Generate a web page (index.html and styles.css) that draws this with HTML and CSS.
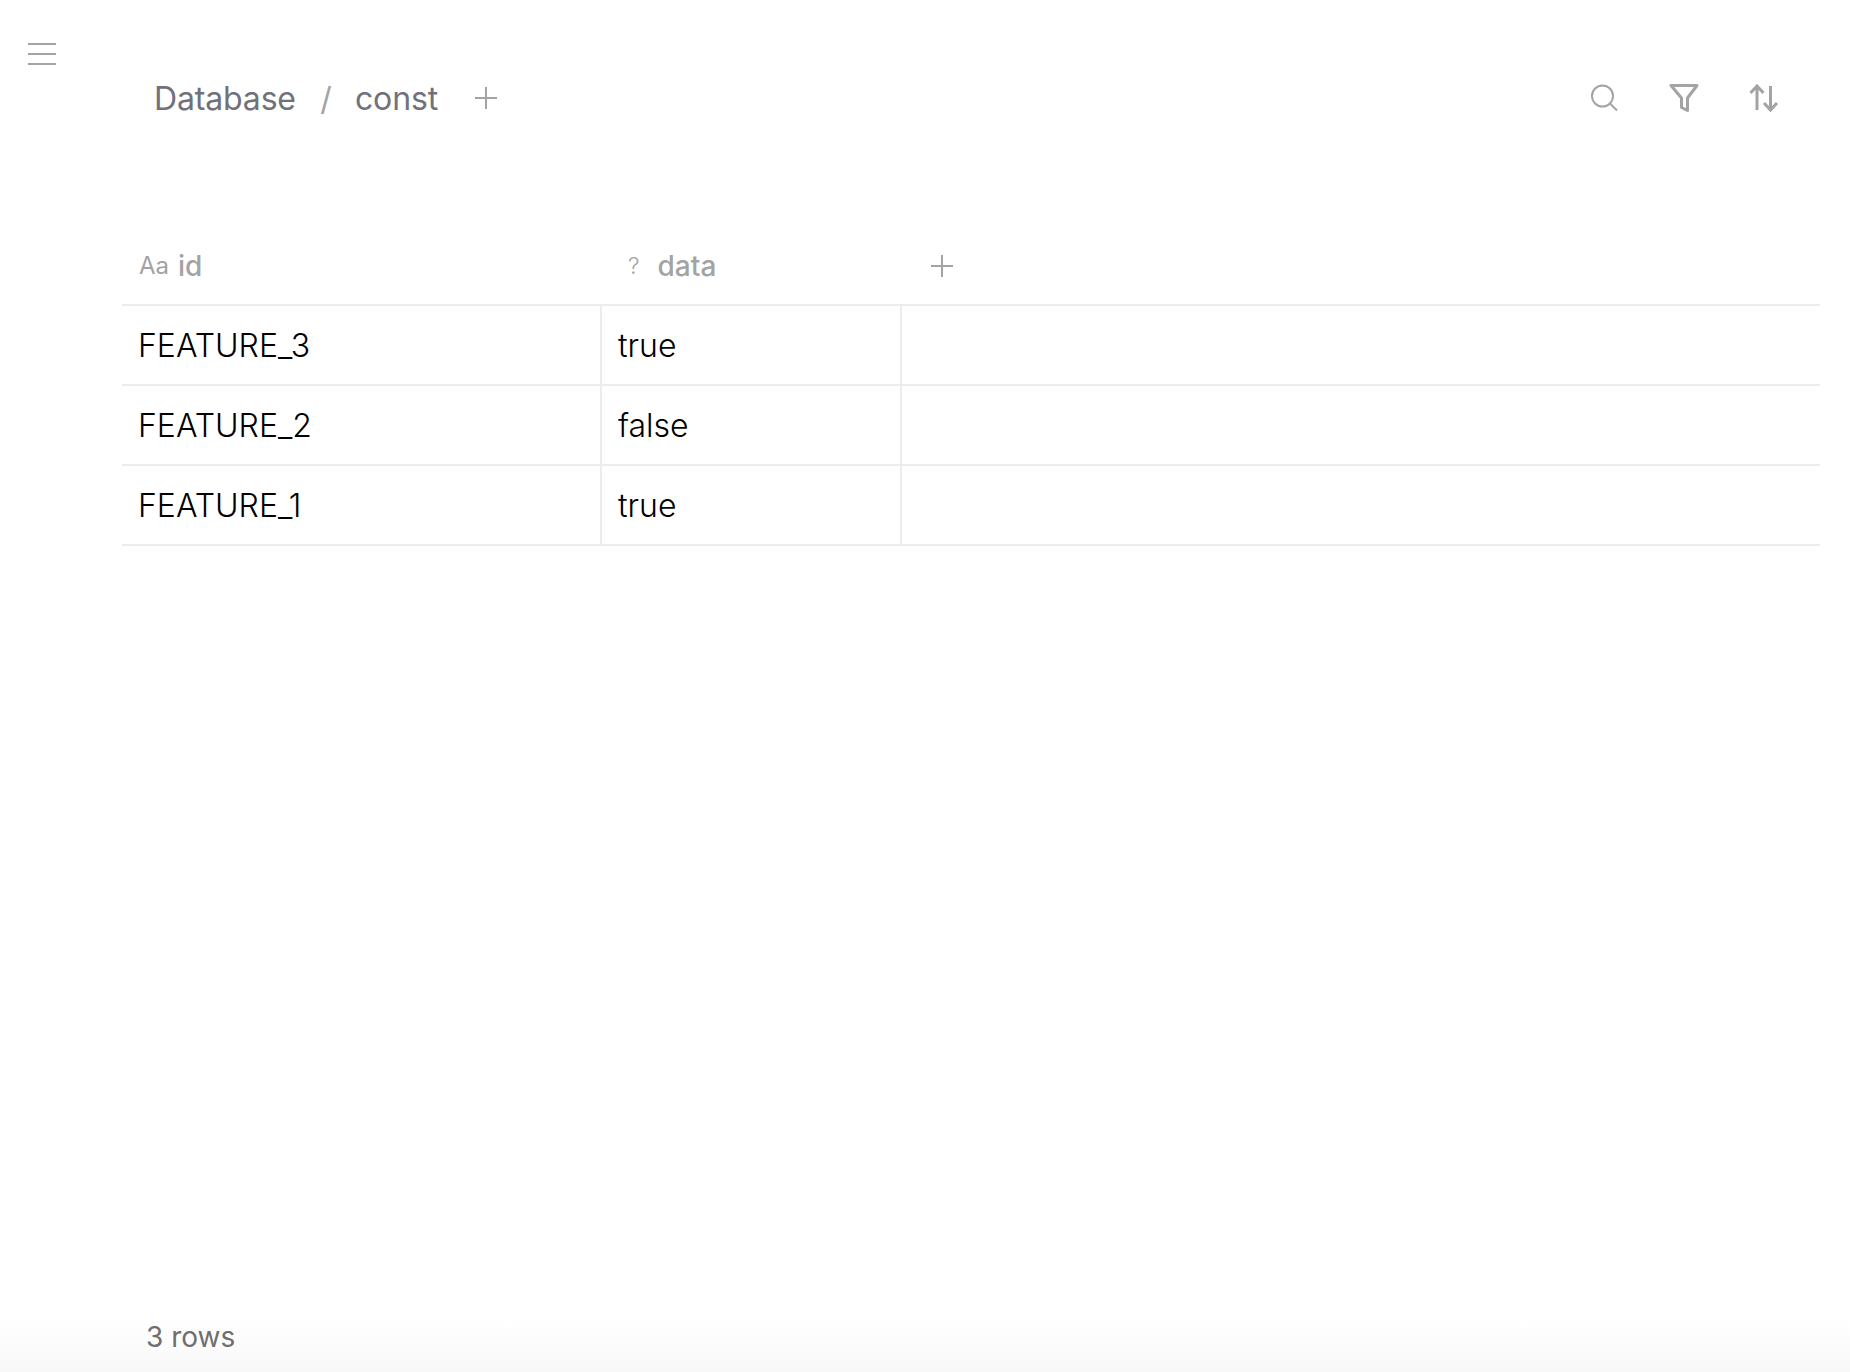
FILE: index.html
```html
<!DOCTYPE html>
<html lang="en">
<head>
<meta charset="utf-8">
<title>const</title>
<link rel="stylesheet" href="styles.css">
</head>
<body>
<div class="page">
  <div class="menu-col">
    <svg class="menu-icon" width="32" height="24" viewBox="0 0 32 24"><path d="M1 2h28M1 12h28M1 22h28" stroke="#a3a3a3" stroke-width="2" fill="none"/></svg>
  </div>
  <main class="main">
    <header class="topbar">
      <nav class="crumbs">
        <span class="crumb">Database</span>
        <span class="slash">/</span>
        <span class="crumb">const</span>
        <svg class="add" width="24" height="24" viewBox="0 0 24 24"><path d="M12 1v22M1 12h22" stroke="#a3a3a3" stroke-width="2" fill="none"/></svg>
      </nav>
      <div class="tools">
        <svg width="30" height="30" viewBox="0 0 30 30" fill="none" stroke="#a3a3a3" stroke-width="2"><circle cx="13.5" cy="13" r="10.5"/><path d="M21.5 21l6.5 6.5"/></svg>
        <svg width="30" height="30" viewBox="0 0 30 30" fill="none" stroke="#a3a3a3" stroke-width="3" stroke-linejoin="round"><path d="M2 2.500h26l-9.500 12.500v12.500l-6-3V15z"/></svg>
        <svg width="30" height="30" viewBox="0 0 30 30" fill="none" stroke="#a3a3a3" stroke-width="3"><path d="M8 27V3M1.500 10L8 3l6.500 7M21.500 3v24M15 20l6.500 7 6.500-7"/></svg>
      </div>
    </header>
    <section class="table">
      <div class="row head">
        <div class="cell c1"><span class="type">Aa</span><span class="hname">id</span></div>
        <div class="cell c2"><span class="type q">?</span><span class="hname">data</span></div>
        <div class="cell c3"><svg width="24" height="24" viewBox="0 0 24 24"><path d="M12 1v22M1 12h22" stroke="#a3a3a3" stroke-width="2" fill="none"/></svg></div>
      </div>
      <div class="row"><div class="cell c1">FEATURE_3</div><div class="cell c2">true</div><div class="cell c3"></div></div>
      <div class="row"><div class="cell c1">FEATURE_2</div><div class="cell c2">false</div><div class="cell c3"></div></div>
      <div class="row"><div class="cell c1">FEATURE_1</div><div class="cell c2">true</div><div class="cell c3"></div></div>
    </section>
    <div class="spacer"></div>
    <footer class="count">3 rows</footer>
  </main>
</div>
</body>
</html>
```
FILE: styles.css
```css
* { box-sizing: border-box; }
html, body { margin: 0; height: 100%; }
body {
  background: #fff;
  font-family: Inter, "Liberation Sans", sans-serif;
  color: #000;
  overflow: hidden;
}
.page {
  display: flex;
  height: 1372px;
  background: linear-gradient(to bottom, #fff 0, #fff 1320px, #f8f8f8 1372px);
}
.menu-col { width: 122px; flex: none; padding: 42px 0 0 27px; }
.menu-icon { display: block; }
.main { flex: 1; display: flex; flex-direction: column; padding-right: 30px; min-width: 0; }
.topbar {
  display: flex;
  align-items: center;
  justify-content: space-between;
  height: 60px;
  margin-top: 68px;
  padding: 0 41px 0 32px;
}
.crumbs { display: flex; align-items: center; font-size: 32px; letter-spacing: -0.15px; color: #71717a; }
.slash { color: #a3a3a3; margin: 0 23.4px 0 24.3px; }
.add { margin-left: 36px; }
.tools { display: flex; gap: 50px; }
.tools svg { display: block; }
.table { margin-top: 102px; }
.row {
  display: flex;
  height: 80px;
  border-bottom: 2px solid #ececec;
  font-size: 32px;
  font-weight: 300;
}
.head { height: 76px; color: #a3a3a3; font-size: 28px; font-weight: 450; }
.cell { display: flex; align-items: center; padding-left: 16px; border-right: 2px solid #ececec; }
.head .cell { border-right: 0; padding-bottom: 3px; }
.head .c1 { padding-left: 17px; }
.head .c3 { padding-left: 28px; }
.c1 { width: 480px; }
.c2 { width: 300px; }
.c3 { flex: 1; border-right: 0; }
.type { font-size: 24px; font-weight: 400; margin-right: 9px; }
.q { margin: 0 18px 0 10px; font-size: 23px; font-weight: 300; }
.spacer { flex: 1; }
.count { font-size: 28px; color: #6e6e6e; padding: 0 0 18px 24px; line-height: 34px; }
```
